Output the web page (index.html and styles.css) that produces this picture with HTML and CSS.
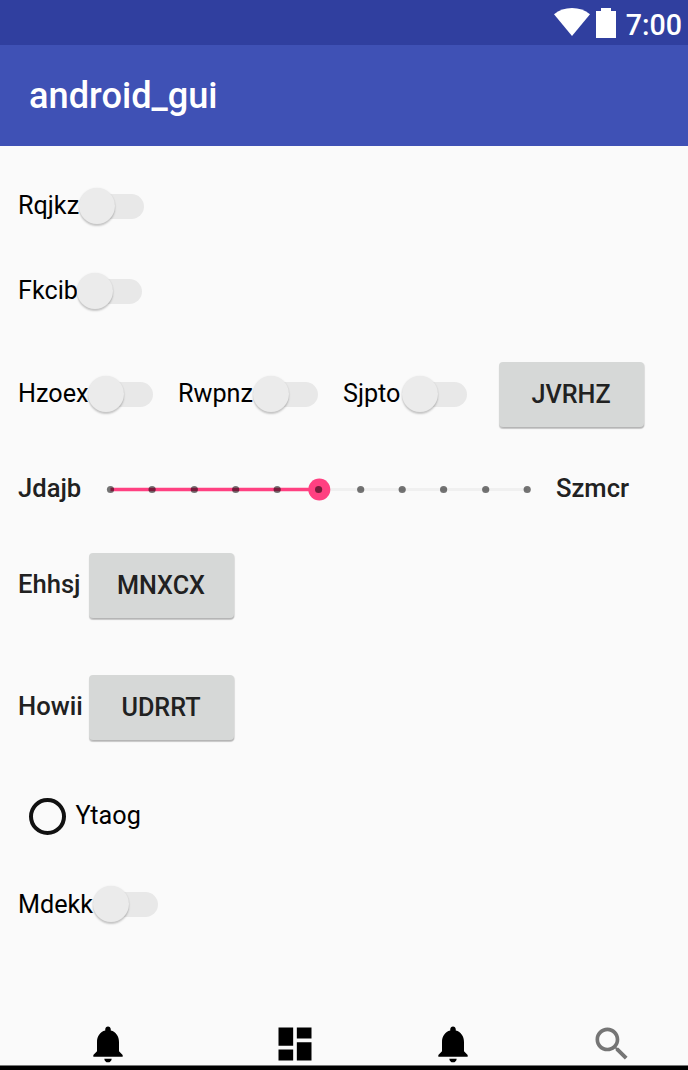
FILE: index.html
```html
<!DOCTYPE html>
<html lang="en">
<head>
<meta charset="utf-8">
<title>android_gui</title>
<link rel="stylesheet" href="styles.css">
</head>
<body>
<div class="screen">
  <div class="status-bar">
    <svg class="wifi" width="36" height="28" viewBox="0 0 36 28"><path d="M0 6.200C5 2.200 11 0 18 0s13 2.200 18 6.200L18 28z" fill="#fff"/></svg>
    <svg class="battery" width="20" height="30" viewBox="0 0 20 30"><path d="M0 3h5V0h10v3h5v27H0z" fill="#fff"/></svg>
    <span class="clock">7:00</span>
  </div>
  <header class="app-bar"><h1 class="title">android_gui</h1></header>
  <main class="content">
    <div class="row row-first"><label class="toggle w1"><span class="text">Rqjkz</span><span class="switch"><span class="thumb"></span></span></label></div>
    <div class="row row-second"><label class="toggle w2"><span class="text">Fkcib</span><span class="switch"><span class="thumb"></span></span></label></div>
    <div class="row row-group">
      <label class="toggle w3"><span class="text">Hzoex</span><span class="switch"><span class="thumb"></span></span></label>
      <label class="toggle w4"><span class="text">Rwpnz</span><span class="switch"><span class="thumb"></span></span></label>
      <label class="toggle w5"><span class="text">Sjpto</span><span class="switch"><span class="thumb"></span></span></label>
      <button class="button">JVRHZ</button>
    </div>
    <div class="row row-slider">
      <span class="label slider-start">Jdajb</span>
      <svg class="slider" width="428" height="24" viewBox="0 0 428 24">
        <path d="M5.500 12.500H422" stroke="#f0f0f0" stroke-width="3"/>
        <path d="M5.500 12.500H214" stroke="#ff4081" stroke-width="3.500"/>
        <circle cx="214.300" cy="12.500" r="11" fill="#ff4081"/>
        <g fill="#000" fill-opacity=".54">
          <circle cx="5.500" cy="12.500" r="3.600"/><circle cx="47.100" cy="12.500" r="3.600"/><circle cx="89.300" cy="12.500" r="3.600"/><circle cx="130.700" cy="12.500" r="3.600"/><circle cx="172.200" cy="12.500" r="3.600"/><circle cx="213.600" cy="12.500" r="3.600"/><circle cx="255.700" cy="12.500" r="3.600"/><circle cx="297.200" cy="12.500" r="3.600"/><circle cx="338.600" cy="12.500" r="3.600"/><circle cx="380.700" cy="12.500" r="3.600"/><circle cx="422.200" cy="12.500" r="3.600"/>
        </g>
      </svg>
      <span class="label">Szmcr</span>
    </div>
    <div class="row row-action"><span class="label action-label">Ehhsj</span><button class="button">MNXCX</button></div>
    <div class="row row-action"><span class="label action-label">Howii</span><button class="button">UDRRT</button></div>
    <div class="row row-radio"><span class="radio"></span><span class="text">Ytaog</span></div>
    <div class="row row-last"><label class="toggle w6"><span class="text">Mdekk</span><span class="switch"><span class="thumb"></span></span></label></div>
  </main>
  <nav class="bottom-nav">
    <svg class="nav-icon" viewBox="0 0 24 24"><path d="M12 22c1.100 0 2-.9 2-2h-4c0 1.100.89 2 2 2zm6-6v-5c0-3.070-1.640-5.640-4.500-6.320V4c0-.83-.67-1.500-1.500-1.500s-1.500.67-1.500 1.500v.68C7.630 5.360 6 7.920 6 11v5l-2 2v1h16v-1l-2-2z"/></svg>
    <svg class="nav-icon nav-dashboard" viewBox="0 0 24 24"><path d="M3 13h8V3H3v10zm0 8h8v-6H3v6zm10 0h8V11h-8v10zm0-18v6h8V3h-8z"/></svg>
    <svg class="nav-icon nav-alerts" viewBox="0 0 24 24"><path d="M12 22c1.100 0 2-.9 2-2h-4c0 1.100.89 2 2 2zm6-6v-5c0-3.070-1.640-5.640-4.500-6.320V4c0-.83-.67-1.500-1.500-1.500s-1.500.67-1.500 1.500v.68C7.630 5.360 6 7.920 6 11v5l-2 2v1h16v-1l-2-2z"/></svg>
    <svg class="nav-icon nav-search" viewBox="0 0 24 24"><path d="M15.500 14h-.79l-.28-.27C15.410 12.590 16 11.110 16 9.500 16 5.910 13.090 3 9.500 3S3 5.910 3 9.500 5.910 16 9.500 16c1.610 0 3.090-.59 4.230-1.570l.27.28v.79l5 4.990L20.490 19l-4.990-5zm-6 0C7.010 14 5 11.990 5 9.500S7.010 5 9.500 5 14 7.010 14 9.500 11.990 14 9.500 14z"/></svg>
  </nav>
  <div class="bottom-edge"></div>
</div>
</body>
</html>
```
FILE: styles.css
```css
* { box-sizing: border-box; }
body { margin: 0; background: #fafafa; font-family: Roboto, sans-serif; }
.screen { width: 688px; height: 1070px; display: flex; flex-direction: column; overflow: hidden; }
.status-bar { height: 45px; background: #303f9f; display: flex; align-items: flex-start; justify-content: flex-end; padding: 8px 6px 0 0; color: #fff; }
.battery { margin: 0 10px 0 6px; }
.clock { font-size: 28.6px; line-height: 34px; font-weight: 500; }
.app-bar { height: 101px; background: #3f51b5; display: flex; align-items: center; padding-left: 29px; }
.title { margin: 0; font-size: 36.2px; font-weight: 500; color: #fff; }
.content { flex: 1; padding-top: 18px; }
.row { display: flex; align-items: center; padding-left: 18px; }
.row-first { height: 84px; }
.row-second { height: 86px; }
.row-group { height: 120px; }
.row-slider { height: 70px; }
.row-action { height: 122px; }
.row-radio { height: 96px; padding-left: 29px; }
.row-last { height: 80px; }
.text { font-size: 25.2px; line-height: 30px; color: #000; }
.row-last .text { padding-top: 2px; }
.label { padding-bottom: 2px; font-size: 25.6px; line-height: 30px; font-weight: 500; color: #212121; white-space: nowrap; }
.toggle { display: flex; align-items: center; justify-content: space-between; white-space: nowrap; }
.toggle .text { width: 0; }
.w1 { width: 126px; }
.w2 { width: 124px; }
.w3 { width: 135px; margin-right: 25px; }
.w4 { width: 139.5px; margin-right: 25.5px; }
.w5 { width: 124px; margin-right: 31.5px; }
.w6 { width: 139.5px; }
.switch { flex: none; width: 65px; height: 25px; border-radius: 13px; background: linear-gradient(to right, transparent 18px, #e8e8e8 18px); display: flex; align-items: center; }
.thumb { flex: none; width: 36px; height: 36px; border-radius: 50%; background: #ebebeb; box-shadow: 0 2px 2px rgba(0, 0, 0, .2), 0 0 2px rgba(0, 0, 0, .08); }
.button { width: 145px; height: 65px; margin: 0; padding: 1px 0 0; border: 0; border-radius: 4px; background: #d6d8d7; color: #212121; font: 500 25.2px/30px Roboto, sans-serif; box-shadow: 0 2px 1px rgba(0, 0, 0, .2), 1px 1px 1px rgba(0, 0, 0, .1); }
.slider-start { width: 87px; }
.slider { margin-right: 23px; }
.action-label { width: 70.5px; }
.radio { width: 37px; height: 37px; border: 4px solid #111; border-radius: 50%; margin-right: 9.5px; }
.bottom-nav { height: 43px; display: flex; padding-left: 86px; }
.nav-icon { flex: none; width: 44px; height: 44px; }
.nav-dashboard { margin-left: 143.2px; }
.nav-alerts { margin-left: 114.3px; }
.nav-search { margin-left: 114.5px; fill: #757575; }
.bottom-edge { height: 5px; background: #000; border-top: 1px solid #777; z-index: 1; }
```
